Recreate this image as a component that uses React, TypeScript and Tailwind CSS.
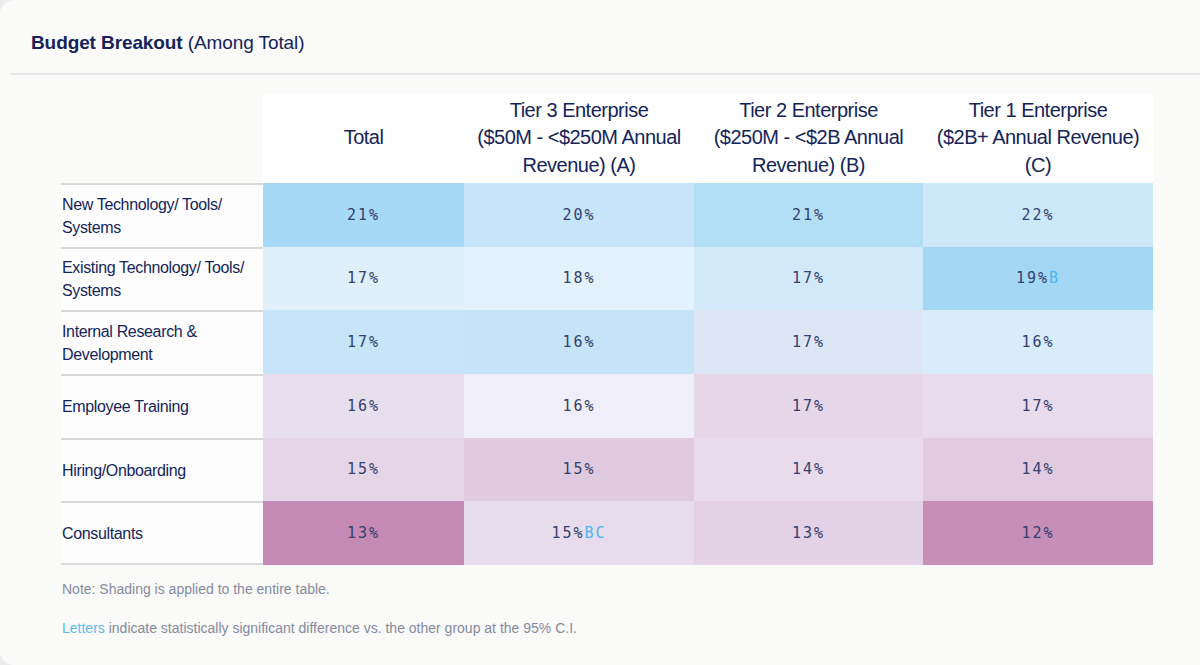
const columns = [
  { key: 'total', label: ['Total'] },
  { key: 't3', label: ['Tier 3 Enterprise', '($50M - <$250M Annual', 'Revenue) (A)'] },
  { key: 't2', label: ['Tier 2 Enterprise', '($250M - <$2B Annual', 'Revenue) (B)'] },
  { key: 't1', label: ['Tier 1 Enterprise', '($2B+ Annual Revenue)', '(C)'] },
];

type Cell = { v: string; sig?: string; bg: string };

const rows: { label: string[]; cells: Cell[] }[] = [
  {
    label: ['New Technology/ Tools/', 'Systems'],
    cells: [
      { v: '21%', bg: 'bg-[#a7d8f5]' },
      { v: '20%', bg: 'bg-[#c7e5f8]' },
      { v: '21%', bg: 'bg-[#b3dff6]' },
      { v: '22%', bg: 'bg-[#cde8f9]' },
    ],
  },
  {
    label: ['Existing Technology/ Tools/', 'Systems'],
    cells: [
      { v: '17%', bg: 'bg-[#e0f0fb]' },
      { v: '18%', bg: 'bg-[#e2f1fb]' },
      { v: '17%', bg: 'bg-[#d2e9f9]' },
      { v: '19%', sig: 'B', bg: 'bg-[#a3d7f4]' },
    ],
  },
  {
    label: ['Internal Research &', 'Development'],
    cells: [
      { v: '17%', bg: 'bg-[#c6e5f8]' },
      { v: '16%', bg: 'bg-[#c5e4f8]' },
      { v: '17%', bg: 'bg-[#dde6f5]' },
      { v: '16%', bg: 'bg-[#d8ecfa]' },
    ],
  },
  {
    label: ['Employee Training'],
    cells: [
      { v: '16%', bg: 'bg-[#e8dfee]' },
      { v: '16%', bg: 'bg-[#f0eef8]' },
      { v: '17%', bg: 'bg-[#e5d6e8]' },
      { v: '17%', bg: 'bg-[#e8dbeb]' },
    ],
  },
  {
    label: ['Hiring/Onboarding'],
    cells: [
      { v: '15%', bg: 'bg-[#e4d5e7]' },
      { v: '15%', bg: 'bg-[#e0cae0]' },
      { v: '14%', bg: 'bg-[#e8dcec]' },
      { v: '14%', bg: 'bg-[#e0cbe0]' },
    ],
  },
  {
    label: ['Consultants'],
    cells: [
      { v: '13%', bg: 'bg-[#c489b4]' },
      { v: '15%', sig: 'BC', bg: 'bg-[#e6dcec]' },
      { v: '13%', bg: 'bg-[#e3d2e5]' },
      { v: '12%', bg: 'bg-[#c78eb8]' },
    ],
  },
];

export default function App() {
  return (
    <div className="h-[665px] w-[1200px] overflow-hidden bg-[#ececec] font-['Liberation_Sans',Arial,sans-serif]">
      <div className="h-full w-[1220px] rounded-[14px] bg-[#fafaf9]">
        <div className="h-[73px] pl-[31px] pt-[30px] text-[19px] leading-[26px] tracking-[-0.1px] text-[#14245a]">
          <span className="font-bold">Budget Breakout</span> (Among Total)
        </div>
        <div className="ml-[10px] h-[2px] bg-[#e6e6e6]" />

        <div className="ml-[61px] mt-[18px] grid w-[1092px] grid-cols-[202px_201px_230px_229px_230px] grid-rows-[90px_repeat(6,63.67px)] text-[#14245a]">
          <div />
          {columns.map((c) => (
            <div
              key={c.key}
              className="flex flex-col items-center justify-center bg-white text-center text-[20px] leading-[27.5px] tracking-[-0.5px]"
            >
              {c.label.map((l) => (
                <span key={l}>{l}</span>
              ))}
            </div>
          ))}

          {rows.map((r, i) => (
            <Row key={r.label[0]} label={r.label} cells={r.cells} last={i === rows.length - 1} />
          ))}
        </div>

        <div className="ml-[62px] mt-[14px] text-[14px] leading-[20px] text-[#858b9d]">
          Note: Shading is applied to the entire table.
        </div>
        <div className="ml-[62px] mt-[19px] text-[14px] leading-[20px] text-[#858b9d]">
          <span className="text-[#5cbcf2]">Letters</span> indicate statistically significant difference vs.
          the other group at the 95% C.I.
        </div>
      </div>
    </div>
  );
}

function Row({ label, cells, last }: { label: string[]; cells: Cell[]; last: boolean }) {
  return (
    <>
      <div
        className={`flex flex-col justify-center border-t-2 border-[#d9d9d9] bg-[#fdfdfd] pl-px text-[16px] leading-[23px] tracking-[-0.35px] ${
          last ? 'border-b-2' : ''
        }`}
      >
        {label.map((l) => (
          <span key={l}>{l}</span>
        ))}
      </div>
      {cells.map((c, i) => (
        <div
          key={i}
          className={`flex items-center justify-center font-['DejaVu_Sans_Mono',monospace] text-[15px] tracking-[2px] text-[#34416d] ${c.bg}`}
        >
          {c.v}
          {c.sig && <span className="text-[#4fb6f0]">{c.sig}</span>}
        </div>
      ))}
    </>
  );
}
